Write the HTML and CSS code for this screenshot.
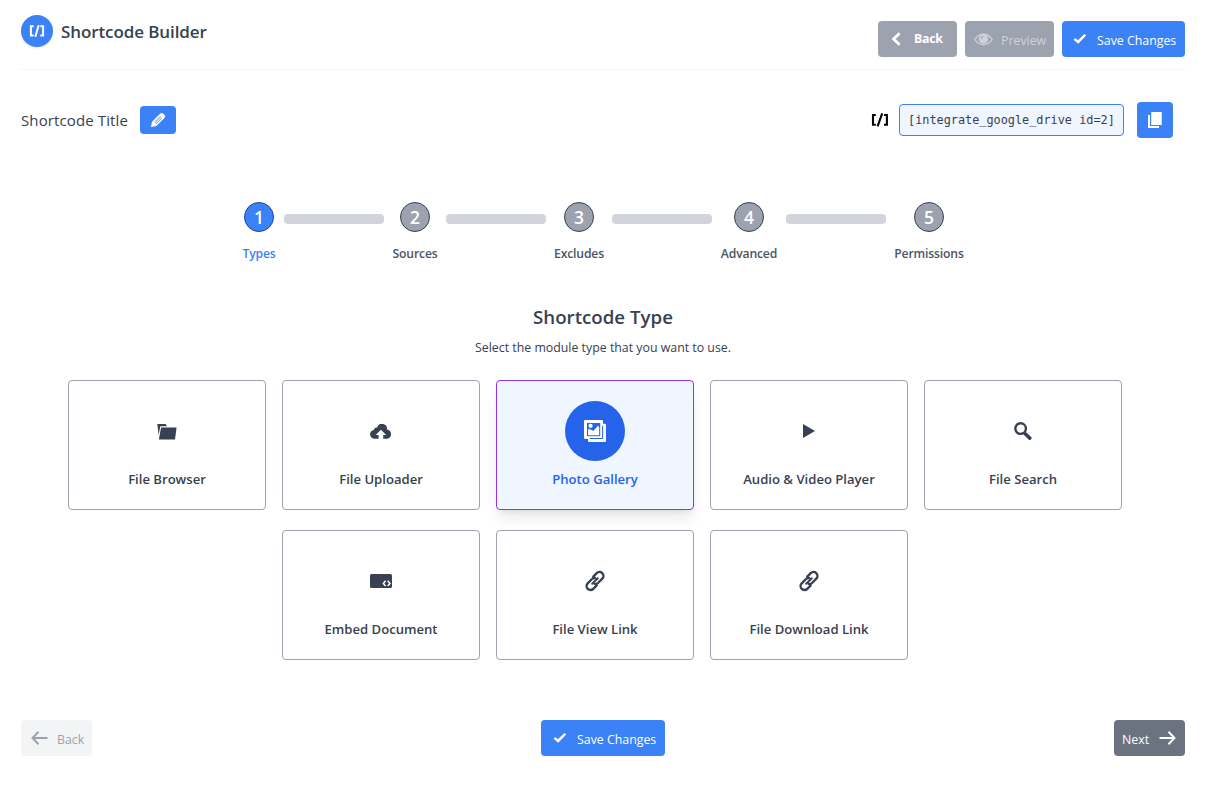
FILE: index.html
```html
<!DOCTYPE html>
<html lang="en">
<head>
<meta charset="utf-8">
<title>Shortcode Builder</title>
<link rel="stylesheet" href="styles.css">
</head>
<body>
<svg width="0" height="0" class="sprite" aria-hidden="true">
  <symbol id="check" viewBox="0 0 14 12"><path d="M0.6 6.8 2.3 4.9 5 7.3 11.4 0.9 13.2 2.6 5.2 10.8z" fill="currentColor"/></symbol>
  <symbol id="link" viewBox="0 0 22 22"><g fill="none" stroke="currentColor" stroke-width="2.4" stroke-linecap="round"><path d="M9.3 6.6 12.7 3.2a3.9 3.9 0 0 1 5.6 5.5L14 13a3.6 3.6 0 0 1-3.2.9"/><path d="M12.7 15.4 9.3 18.8a3.9 3.9 0 0 1-5.6-5.5L8 9a3.6 3.6 0 0 1 3.2-.9"/><path d="M8.2 13.8 13.8 8.2" stroke-width="2"/></g></symbol>
</svg>
<div class="page">
  <header class="header">
    <div class="brand">
      <span class="brand-logo"><svg width="16" height="12" viewBox="0 0 16 12" fill="none" stroke="currentColor" stroke-width="2"><path d="M4.7 1.2H1.9v9.3h2.8M11.3 1.2h2.8v9.3h-2.8M9.7.2 6.3 11.8"/></svg></span>
      <h1 class="brand-name">Shortcode Builder</h1>
    </div>
    <div class="actions">
      <button class="btn gray top-back"><svg width="10" height="14" viewBox="0 0 10 14" fill="none" stroke="currentColor" stroke-width="2.8"><path d="M8.6 1.2 2.6 7l6 5.8"/></svg><span>Back</span></button>
      <button class="btn gray preview"><svg width="19" height="13" viewBox="0 0 19 13"><path d="M.8 6.5C3 3 6 1.2 9.5 1.2S16 3 18.2 6.5C16 10 13 11.6 9.5 11.6S3 10 .8 6.5z" fill="none" stroke="currentColor" stroke-width="1.4"/><circle cx="9.5" cy="6" r="4.7" fill="currentColor"/><path d="M7.2 5.6q.3-2 2.2-2.4" fill="none" stroke="#9ca3af" stroke-width="1.1"/></svg><span>Preview</span></button>
      <button class="btn blue save"><svg width="14" height="12"><use href="#check"/></svg><span>Save Changes</span></button>
    </div>
  </header>

  <section class="title-bar">
    <div class="title-edit">
      <span class="title-text">Shortcode Title</span>
      <button class="edit-btn"><svg width="16" height="16" viewBox="0 0 16 16"><path d="M1 15 2 9.8 9.8 2Q11.6.2 13.4 1.7L14.5 2.8Q16 4.5 14.2 6.3L6.3 14z" fill="currentColor"/><path d="M4.3 10.3 10.2 4.4M6 12 11.9 6.1M5.1 11.1 11 5.2" stroke="#3b82f6" stroke-width=".65"/></svg></button>
    </div>
    <div class="shortcode">
      <svg width="18" height="14" viewBox="0 0 18 14" fill="none" stroke="#000" stroke-width="2.1"><path d="M4.8 2H2v9.8h2.8M13 2h2.9v9.8H13M11.2.4 6.6 13.4"/></svg>
      <code class="code">[integrate_google_drive id=2]</code>
      <button class="copy-btn"><svg width="14" height="16" viewBox="0 0 14 16"><path d="M0 3h2v11h9v2H0z" fill="currentColor"/><path d="M3.2 0h10.6v13H3.2z" fill="currentColor"/></svg></button>
    </div>
  </section>

  <nav class="steps">
    <div class="step types active"><span class="num">1</span><span class="label">Types</span></div>
    <span class="bar"></span>
    <div class="step sources"><span class="num">2</span><span class="label">Sources</span></div>
    <span class="bar"></span>
    <div class="step excludes"><span class="num">3</span><span class="label">Excludes</span></div>
    <span class="bar"></span>
    <div class="step advanced"><span class="num">4</span><span class="label">Advanced</span></div>
    <span class="bar"></span>
    <div class="step permissions"><span class="num">5</span><span class="label">Permissions</span></div>
  </nav>

  <main class="main">
    <h2 class="heading">Shortcode Type</h2>
    <p class="hint">Select the module type that you want to use.</p>
    <div class="cards">
      <div class="card"><span class="icon"><svg width="20" height="17" viewBox="0 0 20 17" fill="currentColor"><path d="M.3 1h8.2l1.2 1.4v.9H3.3L1.6 12z"/><path d="M4 4.4h15.6L18 16.4H1.9z"/></svg></span><span class="name">File Browser</span></div>
      <div class="card"><span class="icon"><svg width="22" height="15" viewBox="0 0 22 15"><path d="M5 14.7a4.3 4.3 0 0 1-1.2-8.6A3.7 3.7 0 0 1 7.2 3.2 5 5 0 0 1 16.9 5.4a4.7 4.7 0 0 1 .2 9.3z" fill="currentColor"/><path d="M10.9 5.8 16.2 11h-3v4H8.6v-4h-3z" fill="#fff"/></svg></span><span class="name">File Uploader</span></div>
      <div class="card selected"><span class="icon"><svg width="22" height="22" viewBox="0 0 22 22"><path d="M1.3 0h16.4Q19 0 19 1.3V3.8h2q1 0 1 1v16.1q0 1.1-1.1 1.1H5.2q-1.2 0-1.2-1.2V19H1.3Q0 19 0 17.7V1.3Q0 0 1.3 0z" fill="currentColor"/><path d="M3 3h13.2v13.2H3z" fill="#2563eb"/><path d="M4.1 15.2V8.7L7.7 10 9.4 11 14 5.8l1.2 1.1v8.3z" fill="currentColor"/><circle cx="6.6" cy="5.8" r="2.1" fill="currentColor"/><path d="M5.9 18.5H18.6V5.8" fill="none" stroke="#2563eb" stroke-width="1"/></svg></span><span class="name">Photo Gallery</span></div>
      <div class="card"><span class="icon"><svg width="14" height="14" viewBox="0 0 14 14"><path d="M1 0 13 7 1 14z" fill="currentColor"/></svg></span><span class="name">Audio &amp; Video Player</span></div>
      <div class="card"><span class="icon"><svg width="18" height="18" viewBox="0 0 18 18" fill="none" stroke="currentColor"><circle cx="6.6" cy="6.6" r="5.3" stroke-width="2.4"/><path d="m11.7 12.2 4.1 3.9" stroke-width="3.6" stroke-linecap="round"/><path d="m10 10.4 2 2" stroke-width="2"/></svg></span><span class="name">File Search</span></div>
      <div class="card"><span class="icon"><svg width="22" height="14" viewBox="0 0 22 14"><rect width="22" height="14" rx="1.5" fill="currentColor"/><path d="m15.6 6.8-2.3 2.6 2.3 2.7M17.7 6.8 20 9.4l-2.3 2.7" fill="none" stroke="#fff" stroke-width="1.5"/></svg></span><span class="name">Embed Document</span></div>
      <div class="card"><span class="icon"><svg width="22" height="22"><use href="#link"/></svg></span><span class="name">File View Link</span></div>
      <div class="card"><span class="icon"><svg width="22" height="22"><use href="#link"/></svg></span><span class="name">File Download Link</span></div>
    </div>
  </main>

  <footer class="footer">
    <button class="btn light prev"><svg width="17" height="14" viewBox="0 0 17 14" fill="none" stroke="currentColor" stroke-width="2"><path d="M7.5.8 1.5 7l6 6.2M1.5 7H16.5"/></svg><span>Back</span></button>
    <button class="btn blue save bottom"><svg width="14" height="12"><use href="#check"/></svg><span>Save Changes</span></button>
    <button class="btn dark next"><span>Next</span><svg width="17" height="14" viewBox="0 0 17 14" fill="none" stroke="currentColor" stroke-width="2"><path d="M9.5.8l6 6.2-6 6.2M15.5 7H.5"/></svg></button>
  </footer>
</div>
</body>
</html>
```
FILE: styles.css
```css
* { box-sizing: border-box; }
body { margin: 0; background: #fff; color: #374151; font-family: "Open Sans", "Noto Sans", sans-serif; font-size: 12.35px; }
h1, h2, p { margin: 0; }
svg { display: block; flex: none; }
.sprite { position: absolute; }
button { border: 0; margin: 0; font: inherit; white-space: nowrap; }
.page { height: 792px; padding: 0 20px 0 21px; display: flex; flex-direction: column; }

.header { height: 70px; display: flex; justify-content: space-between; border-bottom: 1px solid #f3f4f6; }
.brand { display: flex; align-items: center; gap: 8px; height: 32px; margin-top: 15px; }
.brand-logo { width: 32px; height: 32px; border-radius: 50%; background: #3b82f6; color: #fff; display: flex; align-items: center; justify-content: center; box-shadow: 0 1px 2px rgba(0,0,0,.1); }
.brand-name { font-size: 17px; font-weight: 600; letter-spacing: -.1px; }
.actions { display: flex; gap: 8px; padding-top: 21px; }
.btn { height: 36px; border-radius: 4px; display: flex; align-items: center; color: #fff; padding: 0; }
.btn span { position: relative; top: 1px; }
.gray { background: #9ca3af; }
.blue { background: #3b82f6; }
.light { background: #f3f4f6; color: #9ca3af; }
.dark { background: #6b7280; }
.top-back { width: 79px; padding-left: 13px; gap: 13px; font-weight: 700; letter-spacing: -.25px; }
.top-back span { top: -1px; }
.preview { width: 89px; padding-left: 9px; gap: 8px; color: #ced1d7; }
.save { width: 123px; padding-left: 11px; gap: 10px; }

.title-bar { height: 36px; margin-top: 32px; padding-right: 12px; display: flex; justify-content: space-between; align-items: center; }
.title-edit { display: flex; align-items: center; }
.title-text { width: 119px; font-size: 15px; letter-spacing: .12px; white-space: nowrap; }
.edit-btn { width: 36px; height: 28px; border-radius: 4px; padding: 0; background: #3b82f6; color: #fff; display: flex; align-items: center; justify-content: center; }
.shortcode { display: flex; align-items: center; }
.code { width: 225px; height: 32px; margin: 0 13px 0 10px; border: 1px solid #3b82f6; border-radius: 4px; background: #eff6ff; padding-left: 8px; line-height: 30px; font-family: "DejaVu Sans Mono", monospace; font-size: 11.85px; white-space: nowrap; }
.copy-btn { width: 36px; height: 36px; padding: 0; border-radius: 4px; background: #3b82f6; color: #fff; display: flex; align-items: center; justify-content: center; }

.steps { margin-top: 64px; height: 62px; display: flex; justify-content: center; gap: 8px; }
.step { display: flex; flex-direction: column; align-items: center; gap: 13px; font-weight: 600; color: #4b5563; }
.types { width: 34px; }
.sources { width: 46px; }
.excludes { width: 50px; }
.advanced { width: 58px; }
.permissions { width: 70px; }
.num { width: 30px; height: 30px; border-radius: 50%; border: 1px solid #374151; background: #9ca3af; color: #fff; text-align: center; line-height: 28px; font-size: 17.5px; font-weight: 600; }
.label { font-size: 12.2px; letter-spacing: -.16px; line-height: 18px; white-space: nowrap; }
.active { color: #3b82f6; }
.active .num { background: #3b82f6; border-color: #1e40af; }
.bar { width: 100px; height: 10px; margin-top: 12px; border-radius: 4px; background: #d1d5db; }

.main { margin-top: 39px; display: flex; flex-direction: column; align-items: center; }
.heading { font-size: 18.7px; font-weight: 600; line-height: 28px; }
.hint { margin-top: 7px; line-height: 20px; white-space: nowrap; }
.cards { width: 1070px; margin-top: 22px; padding-right: 16px; display: flex; flex-wrap: wrap; justify-content: center; gap: 20px 16px; }
.card { width: 198px; height: 130px; border: 1px solid #9ca3af; border-radius: 4px; background: #fff; display: flex; flex-direction: column; align-items: center; padding-top: 20px; gap: 8px; }
.icon { width: 60px; height: 60px; border-radius: 50%; display: flex; align-items: center; justify-content: center; }
.name { font-size: 13.1px; font-weight: 600; line-height: 20px; white-space: nowrap; }
.selected { background: #eff6ff; border-color: #9333ea; color: #2563eb; box-shadow: 0 10px 15px -3px rgba(0,0,0,.1), 0 4px 6px -4px rgba(0,0,0,.1); }
.selected .icon { background: #2563eb; color: #fff; }

.footer { margin-top: 60px; display: flex; justify-content: space-between; }
.prev { width: 71px; padding-left: 10px; gap: 9px; }
.bottom { width: 124px; padding-left: 12px; }
.next { width: 71px; padding-left: 8px; gap: 10px; }
```
